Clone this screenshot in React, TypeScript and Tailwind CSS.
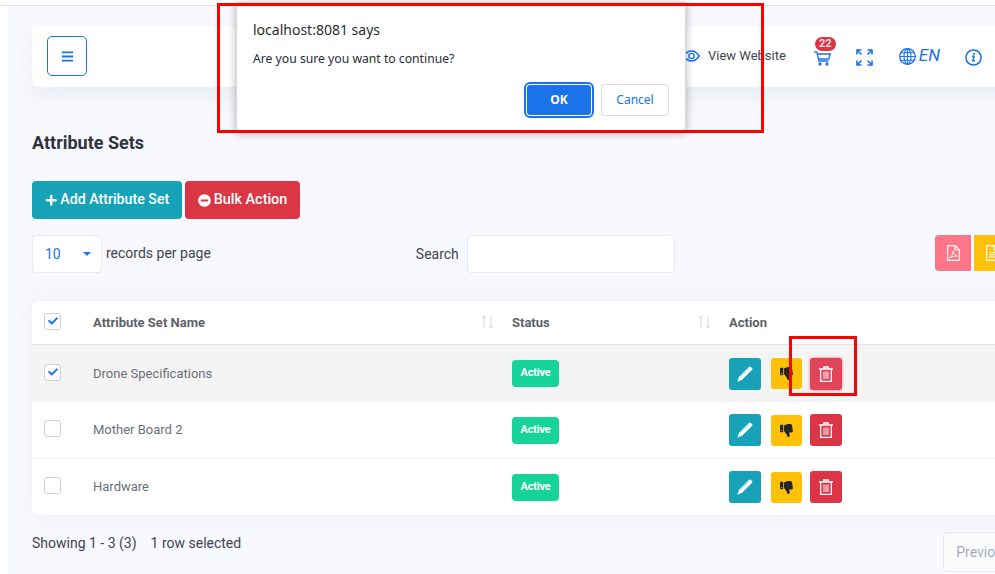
import React from "react";
import { FaBars, FaPlus, FaMinusCircle, FaThumbsDown, FaCheck } from "react-icons/fa";

const rows = [
  { name: "Drone Specifications", checked: true, h: "h-[57px]", bg: "bg-[#f4f4f4]" },
  { name: "Mother Board 2", checked: false, h: "h-[57px]", bg: "bg-white" },
  { name: "Hardware", checked: false, h: "h-[56px]", bg: "bg-white" },
];

function Check({ checked }: { checked: boolean }) {
  return (
    <div className="w-[17px] h-[17px] rounded-[3px] border border-[#cfcfd4] bg-white flex items-center justify-center">
      {checked && <FaCheck className="text-[#1a73e8] text-[10px]" />}
    </div>
  );
}

function Sort() {
  return (
    <svg width="13" height="14" viewBox="0 0 13 14" fill="none" stroke="#d5d8de" strokeWidth="1" className="mt-[2px]">
      <path d="M3 13V1M1 3.5 3 1l2 2.5" />
      <path d="M10 1v12M8 10.5 10 13l2-2.5" />
    </svg>
  );
}

function Eye() {
  return (
    <svg width="17" height="12" viewBox="0 0 17 12" fill="none" stroke="currentColor">
      <path d="M.8 6C3 2.6 5.6 1 8.5 1s5.500 1.600 7.700 5c-2.200 3.400-4.800 5-7.700 5S3 9.400.8 6Z" strokeWidth="1.500" />
      <circle cx="8.500" cy="6" r="2.600" strokeWidth="1.400" />
    </svg>
  );
}

function Cart() {
  return (
    <svg width="17" height="15" viewBox="0 0 17 15" fill="none" stroke="currentColor" strokeWidth="1.300">
      <path d="M.3 1h2.500l2.200 9h9.300" />
      <path d="M3.300 3h13l-1.500 5H4.500" />
      <circle cx="6" cy="13" r="1" fill="currentColor" />
      <circle cx="13" cy="13" r="1" fill="currentColor" />
    </svg>
  );
}

function Expand() {
  return (
    <svg width="17" height="17" viewBox="0 0 17 17" fill="none" stroke="currentColor" strokeWidth="1.600">
      <path d="M1 5.500V1h4.500M1.200 1.200l4.300 4.300" />
      <path d="M16 5.500V1h-4.500M15.800 1.200l-4.300 4.300" />
      <path d="M1 11.500V16h4.500M1.200 15.800l4.300-4.300" />
      <path d="M16 11.500V16h-4.500M15.800 15.800l-4.300-4.300" />
    </svg>
  );
}

function Globe() {
  return (
    <svg width="17" height="17" viewBox="0 0 17 17" fill="none" stroke="currentColor" strokeWidth="1.100">
      <circle cx="8.500" cy="8.500" r="7.800" strokeWidth="1.300" />
      <ellipse cx="8.500" cy="8.500" rx="3.500" ry="7.800" />
      <path d="M8.500.7v15.600M.7 8.500h15.600M1.800 4.700h13.400M1.800 12.300h13.400" />
    </svg>
  );
}

function Info() {
  return (
    <svg width="17" height="17" viewBox="0 0 17 17" fill="none" stroke="currentColor">
      <circle cx="8.500" cy="8.500" r="7.600" strokeWidth="1.500" />
      <path d="M7 7.300h2l-.9 4.200H7M7 11.700h3" strokeWidth="1.500" />
      <circle cx="9" cy="4.800" r="1.100" fill="currentColor" stroke="none" />
    </svg>
  );
}

function Pencil() {
  return (
    <svg width="16" height="16" viewBox="0 0 16 16" fill="currentColor">
      <path d="M11.800.9a1.500 1.500 0 0 1 2.100 0l1 1a1.500 1.500 0 0 1 0 2.100L5.400 13.600 1 15.500a.4.4 0 0 1-.5-.5l1.800-4.500L11.800.9Z" />
      <path d="M3.200 11 12 2.200" stroke="#17a2b8" strokeWidth=".5" />
    </svg>
  );
}

function Trash() {
  return (
    <svg width="14" height="16" viewBox="0 0 14 16" fill="none" stroke="currentColor" strokeWidth="1.300">
      <path d="M0 3h14" />
      <path d="M4.800 3V1h4.400v2" />
      <path d="M1.700 3v12.300h10.600V3" />
      <path d="M5 5.500v7.500M9 5.500v7.500M7 5.500v7.500" strokeWidth="1" />
    </svg>
  );
}

function FilePdf() {
  return (
    <svg width="13" height="16" viewBox="0 0 13 16" fill="none" stroke="currentColor" strokeWidth="1.100">
      <path d="M.6.6h7.600l4.200 4.200v10.600H.600Z" />
      <path d="M8 .6v4.400h4.400" />
      <path d="M2.500 13c2-1 3.500-4 3.500-7 .5 3 2 4.500 4.500 5-2.500-.2-5.500.5-8 2Z" strokeWidth=".9" />
    </svg>
  );
}

function FileDoc() {
  return (
    <svg width="13" height="16" viewBox="0 0 13 16" fill="none" stroke="currentColor" strokeWidth="1.100">
      <path d="M.6.6h7.600l4.200 4.200v10.600H.600Z" />
      <path d="M8 .6v4.400h4.400" />
      <path d="M3 7.500h7M3 9.800h7M3 12h7" />
    </svg>
  );
}

export default function App() {
  return (
    <div className="relative w-[995px] h-[574px] overflow-hidden bg-white font-['Roboto',sans-serif]">
      <div className="h-[6px] border-b border-[#dcdde2] bg-white" />
      <main className="ml-[8px] h-[568px] bg-[#f8f9fe] pl-[24px] pt-[20px] w-[1040px]">
        <header className="h-[61px] w-[1000px] rounded-[6px] bg-white shadow-[0_10px_20px_rgba(60,70,100,0.07)] flex items-center pl-[15px] pr-[50px]">
          <button className="w-[40px] h-[40px] rounded-[5px] border border-[#1a73e8] -mt-[1px] flex items-center justify-center text-[#1a73e8]">
            <FaBars className="text-[13px]" />
          </button>
          <div className="ml-auto flex items-center text-[#1a73e8] -mt-[1px]">
            <Eye />
            <span className="ml-[8px] text-[13px] text-[#3f4450]">View Website</span>
            <div className="relative ml-[28px] mt-[4px] flex">
              <Cart />
              <span className="absolute -top-[14px] left-[1px] h-[14px] w-[21px] rounded-full bg-[#dc3545] text-[#f3dfe2] text-[11px] font-bold leading-[14px] text-center">22</span>
            </div>
            <div className="ml-[25px] mt-[2px] flex"><Expand /></div>
            <div className="ml-[26px] flex"><Globe /></div>
            <span className="ml-[3px] text-[17px] italic">EN</span>
            <div className="ml-[25px] mt-[2px] flex"><Info /></div>
          </div>
        </header>

        <h1 className="mt-[44px] text-[18px] leading-[24px] font-bold text-[#2f3340]">Attribute Sets</h1>

        <div className="mt-[26px] flex gap-[3px]">
          <button className="h-[38px] w-[150px] rounded-[4px] bg-[#17a2b8] text-white text-[14.2px] font-medium flex items-center justify-center gap-[3px]">
            <FaPlus className="text-[12.500px]" /> Add Attribute Set
          </button>
          <button className="h-[38px] w-[115px] rounded-[4px] bg-[#dc3545] text-white text-[14.4px] font-medium flex items-center justify-center gap-[3px]">
            <FaMinusCircle className="text-[13px]" /> Bulk Action
          </button>
        </div>

        <div className="mt-[16px] h-[38px] flex items-start w-[978px]">
          <div className="h-[38px] w-[70px] rounded-[4px] border border-[#e6e9f7] bg-white flex items-center pl-[12px] text-[14px] text-[#1a73e8]">
            10
            <span className="ml-[22px] -mt-[1px] border-x-[4.500px] border-x-transparent border-t-[4.500px] border-t-[#1a73e8]" />
          </div>
          <span className="ml-[4px] mt-[8px] text-[14px] text-[#3f4450]">records per page</span>
          <span className="ml-[205px] mt-[9px] text-[14px] text-[#3f4450]">Search</span>
          <div className="ml-[8px] h-[38px] w-[208px] rounded-[4px] border border-[#e6e9f7] bg-white" />
          <div className="ml-auto flex gap-[3px]">
            <button className="w-[36px] h-[36px] rounded-l-[4px] bg-[#ff7588] text-white flex items-center justify-center"><FilePdf /></button>
            <button className="w-[36px] h-[36px] bg-[#ffc107] text-white flex items-center justify-center"><FileDoc /></button>
          </div>
        </div>

        <div className="mt-[28px] w-[1000px] rounded-[6px] bg-white overflow-hidden shadow-[0_-10px_20px_rgba(60,70,100,0.03),0_8px_20px_rgba(60,70,100,0.04)]">
          <div className="h-[44px] border-b border-[#e1e3e8] grid grid-cols-[61px_419px_217px_1fr] items-center text-[13px] font-bold text-[#5e6169]">
            <div className="pl-[12px] -mt-[3px]"><Check checked /></div>
            <div className="flex justify-between pr-[18px]">Attribute Set Name <Sort /></div>
            <div className="flex justify-between pr-[18px]">Status <Sort /></div>
            <div>Action</div>
          </div>
          {rows.map((r, i) => (
            <div key={r.name} className={`${r.h} ${r.bg} ${i === 1 ? "border-b border-[#f2f2f4]" : ""} grid grid-cols-[61px_419px_217px_1fr] items-center text-[13px] text-[#6b6f78]`}>
              <div className="pl-[12px] -mt-[3px]"><Check checked={r.checked} /></div>
              <div>{r.name}</div>
              <div>
                <span className="inline-flex w-[47px] h-[27px] rounded-[4px] bg-[#16d39a] text-white text-[11px] font-bold tracking-[-0.2px] items-center justify-center">Active</span>
              </div>
              <div className="flex items-center">
                <button className="w-[32px] h-[32px] rounded-[3px] bg-[#17a2b8] text-white flex items-center justify-center"><Pencil /></button>
                <button className="ml-[10px] w-[31px] h-[31px] rounded-[3px] bg-[#ffc107] text-[#212529] flex items-center justify-center"><FaThumbsDown className="text-[13px]" /></button>
                <button className={`ml-[8px] w-[32px] h-[32px] rounded-[3px] text-white flex items-center justify-center ${i === 0 ? "bg-[#e14459] shadow-[0_0_3px_rgba(220,53,69,0.7)]" : "bg-[#dc3545]"}`}><Trash /></button>
              </div>
            </div>
          ))}
        </div>

        <div className="mt-[18px] flex items-start w-[1000px] text-[14px] text-[#3f4450]">
          <span>Showing 1 - 3 (3)</span>
          <span className="ml-[14px]">1 row selected</span>
          <button className="ml-[702px] -mt-[1px] h-[40px] w-[70px] rounded-[4px] border border-[#e6e9f0] bg-[#fbfbfd] text-left pl-[12px] text-[#a6adb8] shrink-0">Previous</button>
        </div>
      </main>

      <div className="absolute left-[236px] top-[2px] w-[450px] h-[129px] rounded-b-[3px] bg-white border border-[#d5d6da] shadow-[0_2px_8px_rgba(0,0,0,0.3)] px-[16px] font-['Noto_Sans',sans-serif] text-[#2a2d33]">
        <div className="mt-[16px] text-[14px] leading-[22px]">localhost:8081 says</div>
        <div className="mt-[9px] text-[12.200px] leading-[18px]">Are you sure you want to continue?</div>
        <div className="absolute right-[16px] bottom-[14px] flex items-center gap-[9px]">
          <button className="w-[66px] h-[32px] rounded-[4px] bg-[#1a73e8] border border-white outline-2 outline-[#1a73e8] text-white text-[12px] font-bold">OK</button>
          <button className="w-[68px] h-[32px] rounded-[4px] border border-[#dadce0] bg-white text-[#1a73e8] text-[12px]">Cancel</button>
        </div>
      </div>

      <div className="absolute left-[217px] top-[3px] w-[547px] h-[130px] border-[3px] border-[#ff0000] pointer-events-none" />
      <div className="absolute left-[789px] top-[336px] w-[68px] h-[60px] border-[3px] border-[#ff0000] pointer-events-none" />
    </div>
  );
}
